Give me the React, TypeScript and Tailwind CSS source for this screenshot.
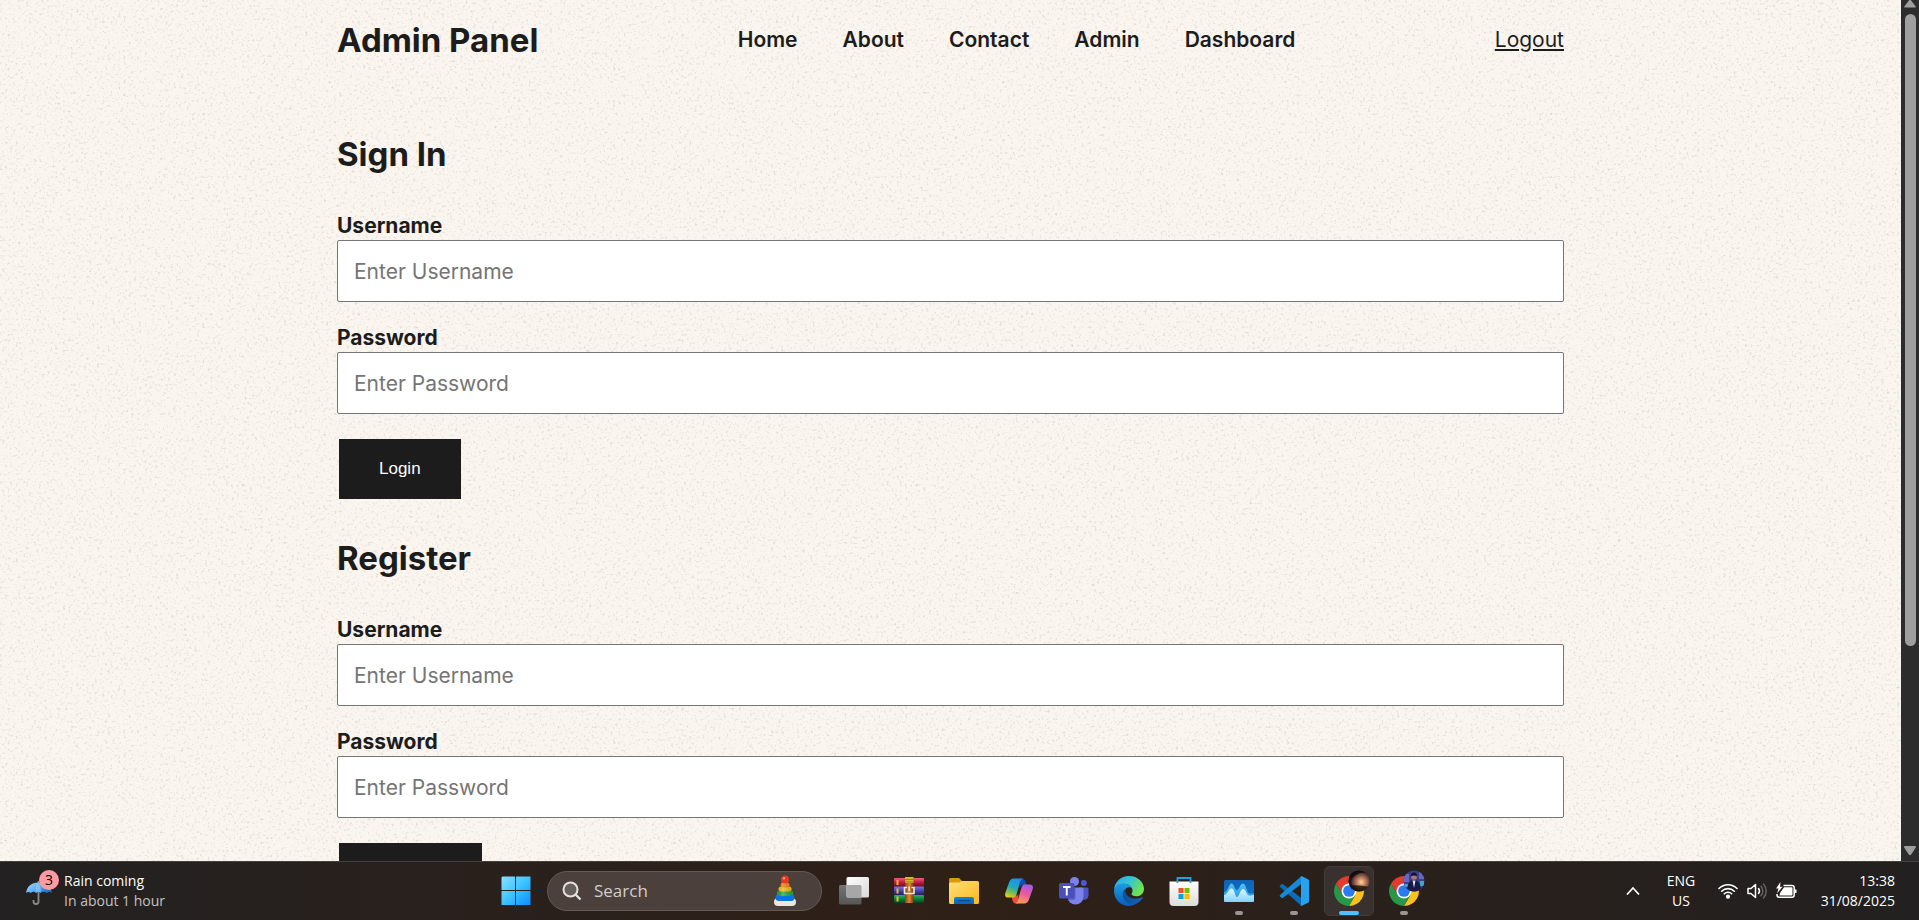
import type { ReactNode } from "react";

const NAV_LINKS = ["Home", "About", "Contact", "Admin", "Dashboard"];

function PaperTexture() {
  return (
    <svg className="absolute inset-0 h-full w-full" aria-hidden="true">
      <filter id="grain" x="0" y="0" width="100%" height="100%" colorInterpolationFilters="sRGB">
        <feTurbulence type="fractalNoise" baseFrequency="0.38" numOctaves="3" seed="7" />
        <feColorMatrix values="0 0 0 0 0.5  0 0 0 0 0.49  0 0 0 0 0.48  2.2 0 0 0 -1.22" />
      </filter>
      <rect width="100%" height="100%" filter="url(#grain)" opacity="0.32" />
    </svg>
  );
}

function Field({ id, label, type }: { id: string; label: string; type: string }) {
  return (
    <div className="mb-5 flex flex-col">
      <label htmlFor={id} className="pt-0.5 text-[21px] font-bold leading-7">
        {label}
      </label>
      <input
        id={id}
        type={type}
        placeholder={`Enter ${label}`}
        className="h-[62px] w-full rounded-[2px] border border-[#767676] bg-white px-4 text-[21px] placeholder:text-[#757575]"
      />
    </div>
  );
}

function AccountForm({ title, prefix, action }: { title: string; prefix: string; action: string }) {
  return (
    <form className="mb-[35px]" onSubmit={(e) => e.preventDefault()}>
      <h2 className="mb-8 text-[33px] font-bold leading-[48px]">{title}</h2>
      <Field id={`${prefix}-username`} label="Username" type="text" />
      <Field id={`${prefix}-password`} label="Password" type="password" />
      <button
        type="submit"
        className="mx-0.5 mt-[5px] h-[60px] bg-[#1c1c1c] px-10 font-['Liberation_Sans',sans-serif] text-[17px] text-white"
      >
        {action}
      </button>
    </form>
  );
}

function Scrollbar() {
  return (
    <div className="flex w-[18px] shrink-0 flex-col items-center bg-[#2c2c2c]" aria-hidden="true">
      <svg width="14" height="14" viewBox="0 0 14 14">
        <path d="M7 -1 12.5 6.2Q13 7.5 12 7.5H2Q1 7.5 1.5 6.2Z" fill="#9f9f9f" />
      </svg>
      <div className="min-h-0 w-full flex-1 px-1">
        <div className="h-[76%] w-[11px] rounded-full bg-[#9f9f9f]" />
      </div>
      <svg width="14" height="16" viewBox="0 0 14 16">
        <path d="M2 1H12Q13.500 1 12.800 2.500L8.200 9.500Q7 11 5.800 9.500L1.200 2.500Q.5 1 2 1Z" fill="#9f9f9f" />
      </svg>
    </div>
  );
}

function Umbrella() {
  return (
    <svg width="30" height="30" viewBox="0 0 30 30">
      <defs>
        <linearGradient id="umb" x2="1" y2=".5">
          <stop stopColor="#b4deff" />
          <stop offset=".5" stopColor="#62b0f4" />
          <stop offset="1" stopColor="#1976d2" />
        </linearGradient>
      </defs>
      <path d="M14.500 5v20.500a2.500 2.500 0 0 1-5 0V24" fill="none" stroke="#8b8b8b" strokeWidth="1.800" />
      <path d="M2 17C3 10 8 6.500 14 6.500S27 10 28 17Q25.500 14.500 23 17 19.500 14.500 16.500 17 14 14.500 12 17 9 14.500 7 17 4 15 2 17Z" fill="url(#umb)" />
      <path d="M12 17Q10 11 14 6.500 18 11 16.500 17 14 14.500 12 17Z" fill="#8cc9fb" opacity=".7" />
    </svg>
  );
}

function WindowsLogo() {
  return (
    <svg width="30" height="30" viewBox="0 0 30 30">
      <defs>
        <linearGradient id="win" x2="1" y2="1">
          <stop stopColor="#8ce0ff" />
          <stop offset=".5" stopColor="#3cc4ff" />
          <stop offset="1" stopColor="#0a8cff" />
        </linearGradient>
      </defs>
      <path d="M1.500 0.500H14V14H.5V1.500ZM15 .5H29.500V14H15ZM.5 15H14V29H.5ZM15 15H29.500V29H15Z" fill="url(#win)" />
    </svg>
  );
}

function StackingToy() {
  return (
    <svg width="24" height="32" viewBox="0 0 24 32">
      <defs>
        <linearGradient id="shine" x2="1">
          <stop stopColor="#000" stopOpacity=".15" />
          <stop offset=".35" stopColor="#fff" stopOpacity=".45" />
          <stop offset="1" stopColor="#000" stopOpacity=".25" />
        </linearGradient>
      </defs>
      <rect x="1" y="23" width="22" height="8" rx="4" fill="#ece6dc" />
      <rect x="2.500" y="19" width="19" height="7" rx="3.500" fill="#0b74e0" />
      <rect x="4" y="15.500" width="16" height="5.500" rx="2.750" fill="#2aa64a" />
      <rect x="5.500" y="11.500" width="13" height="5" rx="2.500" fill="#f3b80f" />
      <rect x="7.500" y="7.500" width="9" height="5" rx="2.500" fill="#f47a1b" />
      <path d="M5 15.500h14v5.500H5ZM6.500 11.500h11v4h-11ZM8.500 7.500h7v4h-7Z" fill="url(#shine)" opacity=".5" />
      <circle cx="12" cy="4.500" r="4" fill="#e33a20" />
      <circle cx="11" cy="3.200" r="1.200" fill="#ff9180" />
    </svg>
  );
}

function TaskView() {
  return (
    <svg width="30" height="30" viewBox="0 0 30 30">
      <defs>
        <linearGradient id="tv" x2="1" y2="1">
          <stop stopColor="#fff" />
          <stop offset="1" stopColor="#d8d8d8" />
        </linearGradient>
        <linearGradient id="tv2" x2="0" y2="1">
          <stop stopColor="#747474" />
          <stop offset="1" stopColor="#565656" />
        </linearGradient>
      </defs>
      <rect x="0" y="9" width="22.500" height="19.500" rx="1.500" fill="url(#tv2)" />
      <rect x="7.500" y="1" width="22.500" height="20.500" rx="1.500" fill="url(#tv)" />
      <path d="M7.500 9H21a1.500 1.500 0 0 1 1.500 1.500v11H9a1.500 1.500 0 0 1-1.500-1.500Z" fill="#a7a7a7" />
    </svg>
  );
}

function WinRar() {
  return (
    <svg width="30" height="30" viewBox="0 0 30 30">
      <defs>
        <linearGradient id="rr" x2="0" y2="1"><stop stopColor="#f2607c" /><stop offset=".5" stopColor="#c21b42" /><stop offset="1" stopColor="#6d0a22" /></linearGradient>
        <linearGradient id="rb" x2="0" y2="1"><stop stopColor="#7a78e0" /><stop offset=".5" stopColor="#4544b0" /><stop offset="1" stopColor="#1f1c66" /></linearGradient>
        <linearGradient id="rg" x2="0" y2="1"><stop stopColor="#2fb25c" /><stop offset=".5" stopColor="#0a8038" /><stop offset="1" stopColor="#04401a" /></linearGradient>
        <linearGradient id="rs" x2="1"><stop stopColor="#8a4210" /><stop offset=".5" stopColor="#e08a34" /><stop offset="1" stopColor="#7c380b" /></linearGradient>
      </defs>
      <rect y="2" width="30" height="8.500" rx="1" fill="url(#rr)" />
      <rect y="10.500" width="30" height="8.500" rx="1" fill="url(#rb)" />
      <rect y="19" width="30" height="8" rx="1" fill="url(#rg)" />
      <path d="M2.500 4h2v5h-2zM2.500 12.500h2v5h-2zM2.500 20.500h2v5h-2z" fill="#f2b632" />
      <rect x="11" y="1" width="8.500" height="26" fill="url(#rs)" />
      <path d="M11 1h8.500v6H11z" fill="#d4b92f" />
      <path d="M11 3.500h8.500M11 6h8.500" stroke="#8b7510" strokeWidth=".8" />
      <path d="M13 11.500h-2.500v6h9.500v-6h-2.500M15.200 10.500v4.500" fill="none" stroke="#f3ebe4" strokeWidth="1.600" />
    </svg>
  );
}

function FileExplorer() {
  return (
    <svg width="30" height="30" viewBox="0 0 30 30">
      <defs>
        <linearGradient id="fe" x2="1" y2="1"><stop stopColor="#ffe07c" /><stop offset="1" stopColor="#fbb91a" /></linearGradient>
        <linearGradient id="fb" x2="0" y2="1"><stop stopColor="#1583d8" /><stop offset="1" stopColor="#0c62b4" /></linearGradient>
      </defs>
      <path d="M0 3.500Q0 2 1.500 2H10l3.500 3.500V9H0Z" fill="#dd9a08" />
      <path d="M0 8Q0 6.500 1.500 6.500H10L13 5H28.500Q30 5 30 6.500V26.500Q30 28 28.500 28H1.500Q0 28 0 26.500Z" fill="url(#fe)" />
      <path d="M5 28V23Q5 21 7 21H23Q25 21 25 23V28Z" fill="url(#fb)" />
      <path d="M9 24.700H21" stroke="#074783" strokeWidth="1.300" strokeLinecap="round" />
    </svg>
  );
}

function Copilot() {
  return (
    <svg width="30" height="30" viewBox="0 0 30 30">
      <defs>
        <linearGradient id="ca" x1=".6" x2=".2" y2="1"><stop stopColor="#2090ee" /><stop offset=".45" stopColor="#20a9bd" /><stop offset=".75" stopColor="#83c04a" /><stop offset="1" stopColor="#f4c917" /></linearGradient>
        <linearGradient id="cb" x1=".7" x2=".3" y2="1"><stop stopColor="#a45bea" /><stop offset=".45" stopColor="#e757a3" /><stop offset="1" stopColor="#ffa052" /></linearGradient>
      </defs>
      <path d="M16 2.500h2q2.500 0 3.300 2.500L22.500 9h-4q-2 0-2.800 2Z" fill="#164fb4" />
      <path d="M14 27.500h-2q-2.500 0-3.300-2.500L7.500 20h4q2 0 2.800-2Z" fill="#f04a3c" />
      <path d="M9.500 2.500H19q-2 .5-2.800 3L12.500 18.500Q11.500 21.500 9 21.500H4.500Q.2 21.500 1.300 17L5 6.500Q6.500 2.500 9.500 2.500Z" fill="url(#ca)" />
      <path d="M20.500 27.500H11q2-.5 2.800-3L17.500 11.500Q18.500 8.500 21 8.500h4.500q4.300 0 3.200 4.500L25 23.500Q23.500 27.500 20.500 27.500Z" fill="url(#cb)" />
    </svg>
  );
}

function Teams() {
  return (
    <svg width="30" height="30" viewBox="0 0 30 30">
      <circle cx="24.800" cy="7" r="3" fill="#5059c9" />
      <path d="M20 11.500h8q1.500 0 1.500 1.500v6.500a4.500 4.500 0 0 1-7 3.500Z" fill="#4f56c4" />
      <circle cx="15.500" cy="5.500" r="4.500" fill="#7b83eb" />
      <path d="M9 11.500H23q1.500 0 1.500 1.500v7.500a8 8 0 0 1-16 0Z" fill="#7b83eb" />
      <path d="M9 11.500h7.500V22a2 2 0 0 1-2 2H9Z" fill="#4a50b4" opacity=".6" />
      <rect y="7" width="15.500" height="15.500" rx="1.500" fill="#4a50b8" />
      <path d="M4 11h7.500M7.750 11v8.500" stroke="#fff" strokeWidth="1.900" />
    </svg>
  );
}

function Edge() {
  return (
    <svg width="30" height="30" viewBox="0 0 30 30">
      <defs>
        <linearGradient id="ea" x1="0" x2="1" y2=".5"><stop stopColor="#25a7e8" /><stop offset=".5" stopColor="#35c4d6" /><stop offset="1" stopColor="#6ee34c" /></linearGradient>
        <linearGradient id="eb" x2="0" y2="1"><stop stopColor="#1b9de2" /><stop offset="1" stopColor="#0c5cba" /></linearGradient>
        <linearGradient id="ec" x2="1"><stop stopColor="#0b5099" /><stop offset="1" stopColor="#1566b3" /></linearGradient>
      </defs>
      <path d="M0 14.500C0 6 7 0 15 0c9 0 15 6.500 15 13 0 4.500-3.500 7.300-7.500 7.300-3.500 0-5-1.300-5-2.300 0-.8 1-1.200 1-3.500 0-3-3-6.500-8-6.500C5 8 1 10.500 0 14.500Z" fill="url(#ea)" />
      <path d="M0 14.500C.6 10 5 7.500 10 7.500c5.500 0 8.500 3.700 8.500 7 0-2-1.500-3.200-3.500-3.200-3 0-4.500 3-4.500 6 0 6.500 6.500 11 13 9C21 29 18 30 15 30 6.500 30 0 23.500 0 14.500Z" fill="url(#eb)" />
      <path d="M11.500 12.500C8.500 15 7.500 20 10.500 24c3 4.500 9 5.500 13.500 2.700 2-1.200 3.600-2.800 4.800-4.700.3-.5-.2-1-.8-.7C22 24 14 22.500 11.800 17c-.6-1.700-.7-3-.3-4.500Z" fill="url(#ec)" />
    </svg>
  );
}

function Store() {
  return (
    <svg width="30" height="30" viewBox="0 0 30 30">
      <defs>
        <linearGradient id="st" x2="0" y2="1"><stop stopColor="#fff" /><stop offset="1" stopColor="#dcdcdc" /></linearGradient>
      </defs>
      <path d="M.5 5.500H29.500V26q0 4-4 4H4.500q-4 0-4-4Z" fill="url(#st)" />
      <path d="M8.500 7V2H21.500V7" fill="none" stroke="#23a3dc" strokeWidth="1.800" />
      <path d="M9.500 12H14.500V17H9.500Z" fill="#f05022" />
      <path d="M15.500 12h5v5h-5Z" fill="#7fb900" />
      <path d="M9.500 18h5v5h-5Z" fill="#01a3ee" />
      <path d="M15.500 18h5v5h-5Z" fill="#ffb800" />
    </svg>
  );
}

function Monitor() {
  return (
    <svg width="30" height="30" viewBox="0 0 30 30">
      <defs>
        <linearGradient id="ma" x2="0" y2="1"><stop stopColor="#0f62b3" /><stop offset="1" stopColor="#0e78cd" /></linearGradient>
        <linearGradient id="mb" x2="0" y2="1"><stop stopColor="#58c0f5" /><stop offset="1" stopColor="#1a8fdb" /></linearGradient>
        <linearGradient id="mc" x2="0" y2="1"><stop stopColor="#e2f6ff" /><stop offset="1" stopColor="#82d3f8" /></linearGradient>
      </defs>
      <rect y="4" width="30" height="22" rx="1.500" fill="url(#ma)" />
      <path d="M0 16C4 16 5 7.500 7.500 7.500S10.500 13 12.500 14C15 15 16 7.500 19 7.500S23 17.500 25.500 17.500 28 17.500 30 17.500V26H0Z" fill="url(#mb)" />
      <path d="M0 19C3.500 19 4.500 12.500 7.500 12.500S11 21 13 21 16.500 13 19 13 23 19.500 25 19.500 28 19 30 19V24.500Q30 26 28.500 26H1.500Q0 26 0 24.500Z" fill="url(#mc)" />
    </svg>
  );
}

function VsCode() {
  return (
    <svg width="30" height="30" viewBox="0 0 30 30">
      <path d="M1 9.500 2.500 8.200Q3.200 7.700 4 8.200L22 21.800V29.500L1 11Q.2 10.200 1 9.500Z" fill="#0b6cb8" />
      <path d="M1 20.500 2.500 21.800Q3.200 22.300 4 21.800L22 8.200V.5L1 19Q.2 19.800 1 20.500Z" fill="#148bd6" />
      <path d="M20.500 29.700C21.500 30.500 22 30 22 28.500V1.500C22 0 21.500-.5 20.500.3 21.400-.2 22 0 22.800.3L29 3.300Q30 3.800 30 4.800V25.200Q30 26.200 29 26.700L22.800 29.700Q21.500 30.200 20.500 29.700Z" fill="#27a2ee" />
    </svg>
  );
}

function Chrome() {
  return (
    <svg width="30" height="30" viewBox="2 2 44 44">
      <path d="M4.950 13A22 22 0 0 1 43.050 13H24V24L14.470 29.500Z" fill="#e33b2e" />
      <path d="M43.050 13A22 22 0 0 1 24 46L33.530 29.500 24 24V13Z" fill="#fcc21b" />
      <path d="M24 46A22 22 0 0 1 4.950 13L14.470 29.500 24 24 33.530 29.500Z" fill="#279847" />
      <circle cx="24" cy="24" r="11" fill="#fff" />
      <circle cx="24" cy="24" r="8.600" fill="#2a7bf0" />
    </svg>
  );
}

function SunsetAvatar() {
  return (
    <svg width="22" height="22" viewBox="0 0 22 22" className="absolute -right-1.5 -top-1.5">
      <defs>
        <radialGradient id="sun" cx=".6" cy=".55"><stop stopColor="#ffd890" /><stop offset=".35" stopColor="#c98668" /><stop offset=".75" stopColor="#664238" /><stop offset="1" stopColor="#17100f" /></radialGradient>
        <clipPath id="avatarClip"><circle cx="11" cy="11" r="10.500" /></clipPath>
      </defs>
      <g clipPath="url(#avatarClip)">
        <rect width="22" height="22" fill="url(#sun)" />
        <path d="M0 0H22V4Q14 1 8 5T0 13ZM0 15.500Q11 14.500 22 17V22H0Z" fill="#100c0b" opacity=".75" />
      </g>
    </svg>
  );
}

function PersonAvatar() {
  return (
    <svg width="22" height="22" viewBox="0 0 22 22" className="absolute -right-1.5 -top-1.5">
      <g clipPath="url(#avatarClip)">
        <rect width="22" height="22" fill="#3b3f8f" />
        <path d="M0 4h6v8H0zM16 2h6v7h-6z" fill="#6866bd" />
        <path d="M17 11h4v5h-4zM2 14h3v3H2z" fill="#46a3c8" />
        <path d="M4 22Q4 10 11 10T18 22Z" fill="#171b43" />
        <path d="M9.500 10.500h3L11 18Z" fill="#d9dcf2" />
        <circle cx="11" cy="6.800" r="3" fill="#a9796b" />
        <path d="M7.800 6.500Q8 2.500 11 2.500t3.200 4Q11 4.500 7.800 6.500Z" fill="#11132f" />
      </g>
    </svg>
  );
}

type App = { name: string; icon: ReactNode; state?: "open" | "active" };

const APPS: App[] = [
  { name: "Task View", icon: <TaskView /> },
  { name: "WinRAR", icon: <WinRar /> },
  { name: "File Explorer", icon: <FileExplorer /> },
  { name: "Copilot", icon: <Copilot /> },
  { name: "Teams", icon: <Teams /> },
  { name: "Edge", icon: <Edge /> },
  { name: "Store", icon: <Store /> },
  { name: "Monitor", icon: <Monitor />, state: "open" },
  { name: "VS Code", icon: <VsCode />, state: "open" },
  { name: "Chrome", icon: <><Chrome /><SunsetAvatar /></>, state: "active" },
  { name: "Chrome profile", icon: <><Chrome /><PersonAvatar /></>, state: "open" },
];

function AppButton({ app }: { app: App }) {
  const active = app.state === "active";
  return (
    <div className="flex w-[55px] justify-center">
      <button
        type="button"
        aria-label={app.name}
        className={
          active
            ? "relative flex h-[50px] w-[50px] items-center justify-center rounded-md border border-[#423c39] bg-[#38312e]"
            : "relative flex h-[50px] w-[50px] items-center justify-center"
        }
      >
        <span className="relative block">{app.icon}</span>
        {app.state && (
          <span
            className={
              active
                ? "absolute bottom-0 h-1 w-5 rounded-full bg-[#4cc2ff]"
                : "absolute bottom-px h-1 w-2 rounded-full bg-[#9b9694]"
            }
          />
        )}
      </button>
    </div>
  );
}

function Tray() {
  return (
    <div className="flex items-center justify-end pr-6 text-sm leading-5 text-white">
      <button type="button" aria-label="Show hidden icons" className="mr-[26px]">
        <svg width="14" height="10" viewBox="0 0 14 10" className="block">
          <path d="M1 8.500 7 2l6 6.500" fill="none" stroke="#fff" strokeWidth="1.800" />
        </svg>
      </button>
      <div className="mr-[22px] w-[30px] text-center">
        ENG
        <br />
        US
      </div>
      <button type="button" aria-label="Network, volume and battery" className="mr-5 flex items-center gap-[9px]">
        <svg width="20" height="18" viewBox="0 0 20 18" fill="none" stroke="#fff" strokeWidth="1.600" strokeLinecap="round">
          <path d="M1 6.500a12.700 12.700 0 0 1 18 0M3.700 9.200a9 9 0 0 1 12.600 0M6.300 11.800a5.300 5.300 0 0 1 7.400 0" />
          <circle cx="10" cy="14.700" r="1.300" fill="#fff" />
        </svg>
        <svg width="20" height="18" viewBox="0 0 20 18" fill="none" stroke="#fff" strokeWidth="1.500" strokeLinecap="round" strokeLinejoin="round">
          <path d="M1 6.500H4L8.500 2.500V15.500L4 11.500H1Z" />
          <path d="M11.500 6.500a4 4 0 0 1 0 5" />
          <path d="M14 4.300a7 7 0 0 1 0 9.400M16.500 2a10.500 10.500 0 0 1 0 14" stroke="#686361" />
        </svg>
        <svg width="21" height="18" viewBox="0 0 21 18">
          <path d="M7.500 3.500H16a2.200 2.200 0 0 1 2.200 2.200V13a2.200 2.200 0 0 1-2.200 2.200H3.200A2.200 2.200 0 0 1 1 13v-1" fill="none" stroke="#fff" strokeWidth="1.500" />
          <path d="M8 5.200h7.500a1 1 0 0 1 1 1V12.500a1 1 0 0 1-1 1H3.500l.5-2.500ZM18.500 7.500h2v3.500h-2z" fill="#fff" />
          <path d="M4.500 0 0 6.500H2.500L1 11.500 6.500 4.800H4Z" fill="#fff" />
        </svg>
      </button>
      <div className="w-[78px] text-right">
        <time>13:38</time>
        <br />
        31/08/2025
      </div>
    </div>
  );
}

function Taskbar() {
  return (
    <footer className="grid h-[59px] shrink-0 grid-cols-[1fr_auto_1fr] items-center border-t border-[#45413f] bg-linear-to-r from-[#232121] via-[#2f2017] via-50% to-[#222020] font-['Open_Sans','Noto_Sans',sans-serif]">
      <button type="button" className="flex items-center gap-2 pl-6 text-left text-sm leading-5">
        <span className="relative block">
          <Umbrella />
          <span className="absolute -top-1.5 left-[15px] flex h-5 w-5 items-center justify-center rounded-full bg-[#ff99a4] text-sm text-black">
            3
          </span>
        </span>
        <span className="pl-0.5 text-white">
          Rain coming
          <span className="block text-[#c3c1c0]">In about 1 hour</span>
        </span>
      </button>
      <div className="flex items-center">
        <button type="button" aria-label="Start" className="flex w-[55px] justify-center">
          <WindowsLogo />
        </button>
        <label className="mx-1 flex h-10 w-[275px] items-center rounded-full border border-[#645954] bg-[#4b403b] pl-3.5 pr-6">
          <svg width="20" height="20" viewBox="0 0 20 20" fill="none" stroke="#e4e1df" strokeWidth="2">
            <circle cx="8.500" cy="8.500" r="7" fill="#68605c" />
            <path d="m13.500 13.500 5 5" strokeWidth="2.400" />
          </svg>
          <input
            type="search"
            aria-label="Search"
            placeholder="Search"
            className="ml-3 min-w-0 flex-1 bg-transparent text-[17px] text-white outline-none placeholder:text-[#d2cecc]"
          />
          <StackingToy />
        </label>
        {APPS.map((app) => (
          <AppButton key={app.name} app={app} />
        ))}
      </div>
      <Tray />
    </footer>
  );
}

export default function App() {
  return (
    <div className="flex h-screen flex-col overflow-hidden bg-[#faf5ee]">
      <div className="flex min-h-0 flex-1">
        <div className="relative min-w-0 flex-1 overflow-hidden font-[Inter,'Noto_Sans',sans-serif] text-[#1c1c1c]">
          <PaperTexture />
          <div className="relative mx-auto max-w-[1227px]">
            <header className="mb-[52px] flex h-[78px] items-center justify-between pt-0.5">
              <h1 className="text-[33px] font-bold leading-[48px]">Admin Panel</h1>
              <nav className="flex gap-[45px] text-[21px] font-semibold">
                {NAV_LINKS.map((name) => (
                  <a key={name} href={`#${name.toLowerCase()}`}>
                    {name}
                  </a>
                ))}
              </nav>
              <a href="#logout" className="text-[21px] underline">
                Logout
              </a>
            </header>
            <main>
              <AccountForm title="Sign In" prefix="signin" action="Login" />
              <AccountForm title="Register" prefix="register" action="Register" />
            </main>
          </div>
        </div>
        <Scrollbar />
      </div>
      <Taskbar />
    </div>
  );
}
